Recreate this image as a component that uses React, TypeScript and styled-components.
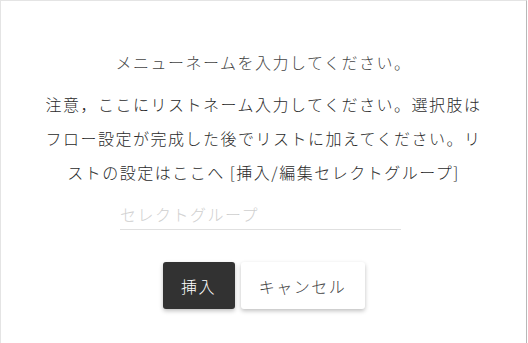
import styled, { createGlobalStyle } from "styled-components";

const GlobalStyle = createGlobalStyle`
  html, body {
    margin: 0;
    padding: 0;
    background: #fff;
  }
  * {
    box-sizing: border-box;
  }
`;

const Dialog = styled.div`
  width: 527px;
  height: 343px;
  border-top: 1px solid #e4e4e4;
  border-left: 1px solid #e4e4e4;
  border-right: 1px solid #b8b8b8;
  background: #fff;
  display: flex;
  flex-direction: column;
  align-items: center;
  padding-top: 49px;
  font-family: "Noto Sans CJK JP", "Noto Sans", sans-serif;
  font-weight: 300;
  color: #2a2a2a;
  font-size: 16px;
  letter-spacing: 1.5px;
`;

const Title = styled.p`
  margin: 0;
  line-height: 24px;
  text-align: center;
  color: #444;
`;

const Note = styled.p`
  margin: 13px 0 0;
  width: 446px;
  line-height: 34px;
  text-align: center;
`;

const GroupInput = styled.input`
  margin-top: 11px;
  width: 281px;
  height: 30px;
  border: none;
  border-bottom: 1px solid #e0e0e0;
  outline: none;
  padding: 0 0 2px;
  font: inherit;
  letter-spacing: 1.5px;
  color: #222;
  background: transparent;
  transform: translateX(-3px);

  &::placeholder {
    color: #cfcfcf;
  }
`;

const Actions = styled.div`
  margin-top: 32px;
  display: flex;
  gap: 6px;
`;

const Button = styled.button<{ $primary?: boolean }>`
  height: 47px;
  width: ${(p) => (p.$primary ? "72px" : "124px")};
  border: none;
  border-radius: 3px;
  font-family: inherit;
  font-weight: 300;
  font-size: 16px;
  letter-spacing: 1.5px;
  padding: 0;
  cursor: pointer;
  background: ${(p) => (p.$primary ? "#323232" : "#fff")};
  color: ${(p) => (p.$primary ? "#fff" : "#444")};
  box-shadow: 0 2px 4px rgba(0, 0, 0, 0.25);
`;

export default function App() {
  return (
    <>
      <GlobalStyle />
      <Dialog>
        <Title>メニューネームを入力してください。</Title>
        <Note>
          注意，ここにリストネーム入力してください。選択肢はフロー設定が完成した後でリストに加えてください。リストの設定はここへ
          [挿入/編集セレクトグループ]
        </Note>
        <GroupInput placeholder="セレクトグループ" />
        <Actions>
          <Button $primary>挿入</Button>
          <Button>キャンセル</Button>
        </Actions>
      </Dialog>
    </>
  );
}
